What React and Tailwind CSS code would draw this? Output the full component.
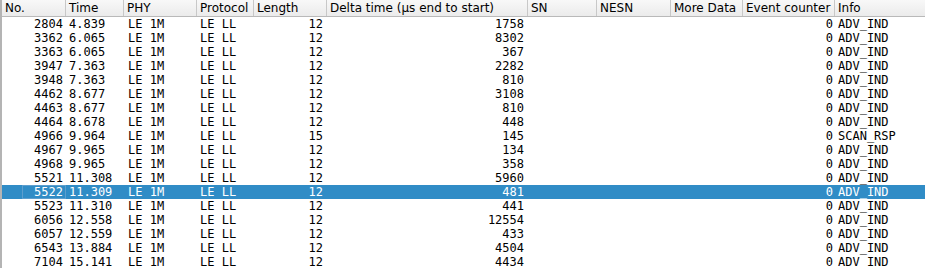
import React from "react";

const rows = [
  ["2804", "4.839", "12", "1758", "ADV_IND"],
  ["3362", "6.065", "12", "8302", "ADV_IND"],
  ["3363", "6.065", "12", "367", "ADV_IND"],
  ["3947", "7.363", "12", "2282", "ADV_IND"],
  ["3948", "7.363", "12", "810", "ADV_IND"],
  ["4462", "8.677", "12", "3108", "ADV_IND"],
  ["4463", "8.677", "12", "810", "ADV_IND"],
  ["4464", "8.678", "12", "448", "ADV_IND"],
  ["4966", "9.964", "15", "145", "SCAN_RSP"],
  ["4967", "9.965", "12", "134", "ADV_IND"],
  ["4968", "9.965", "12", "358", "ADV_IND"],
  ["5521", "11.308", "12", "5960", "ADV_IND"],
  ["5522", "11.309", "12", "481", "ADV_IND"],
  ["5523", "11.310", "12", "441", "ADV_IND"],
  ["6056", "12.558", "12", "12554", "ADV_IND"],
  ["6057", "12.559", "12", "433", "ADV_IND"],
  ["6543", "13.884", "12", "4504", "ADV_IND"],
  ["7104", "15.141", "12", "4434", "ADV_IND"],
];

const grid =
  "grid grid-cols-[64px_58px_73px_57px_73px_201px_69px_74px_72px_92px_1fr]";

const headers = [
  "No.",
  "Time",
  "PHY",
  "Protocol",
  "Length",
  "Delta time (µs end to start)",
  "SN",
  "NESN",
  "More Data",
  "Event counter",
  "Info",
];

export default function App() {
  return (
    <div className="w-[925px] h-[268px] overflow-hidden bg-white border-l-2 border-[#b4b4b4] text-black">
      <div
        className={`${grid} h-[17px] border-b border-[#b9b9b9] bg-gradient-to-b from-[#f8f8f8] to-[#ebebeb] text-[12px] leading-[16px] font-['DejaVu_Sans',sans-serif]`}
      >
        {headers.map((h, i) => (
          <div
            key={h}
            className={`pl-[3px] whitespace-nowrap overflow-hidden ${
              i < headers.length - 1 ? "border-r border-[#c8c8c8]" : ""
            }`}
          >
            {h}
          </div>
        ))}
      </div>
      <div className="font-['DejaVu_Sans_Mono',monospace] text-[12px] leading-[14px]">
        {rows.map((r, idx) => {
          const sel = r[0] === "5522";
          return (
            <div
              key={r[0]}
              className={`${grid} h-[14px] whitespace-nowrap ${
                sel ? "bg-[#308cc6] text-white" : ""
              }`}
            >
              <div className="flex justify-end">
                {sel ? (
                  <span className="ml-auto w-[44px] h-[14px] border border-[#5d9ece] text-right pr-[2px] leading-[12px]">
                    {r[0]}
                  </span>
                ) : (
                  <span className="pr-[3px]">{r[0]}</span>
                )}
              </div>
              <div className="pl-[3px]">{r[1]}</div>
              <div className="pl-[4px]">LE 1M</div>
              <div className="pl-[3px]">LE LL</div>
              <div className="text-right pr-[4px]">{r[2]}</div>
              <div className="text-right pr-[4px]">{r[3]}</div>
              <div></div>
              <div></div>
              <div></div>
              <div className="text-right pr-[2px]">0</div>
              <div className="pl-[3px]">{r[4]}</div>
            </div>
          );
        })}
      </div>
    </div>
  );
}
